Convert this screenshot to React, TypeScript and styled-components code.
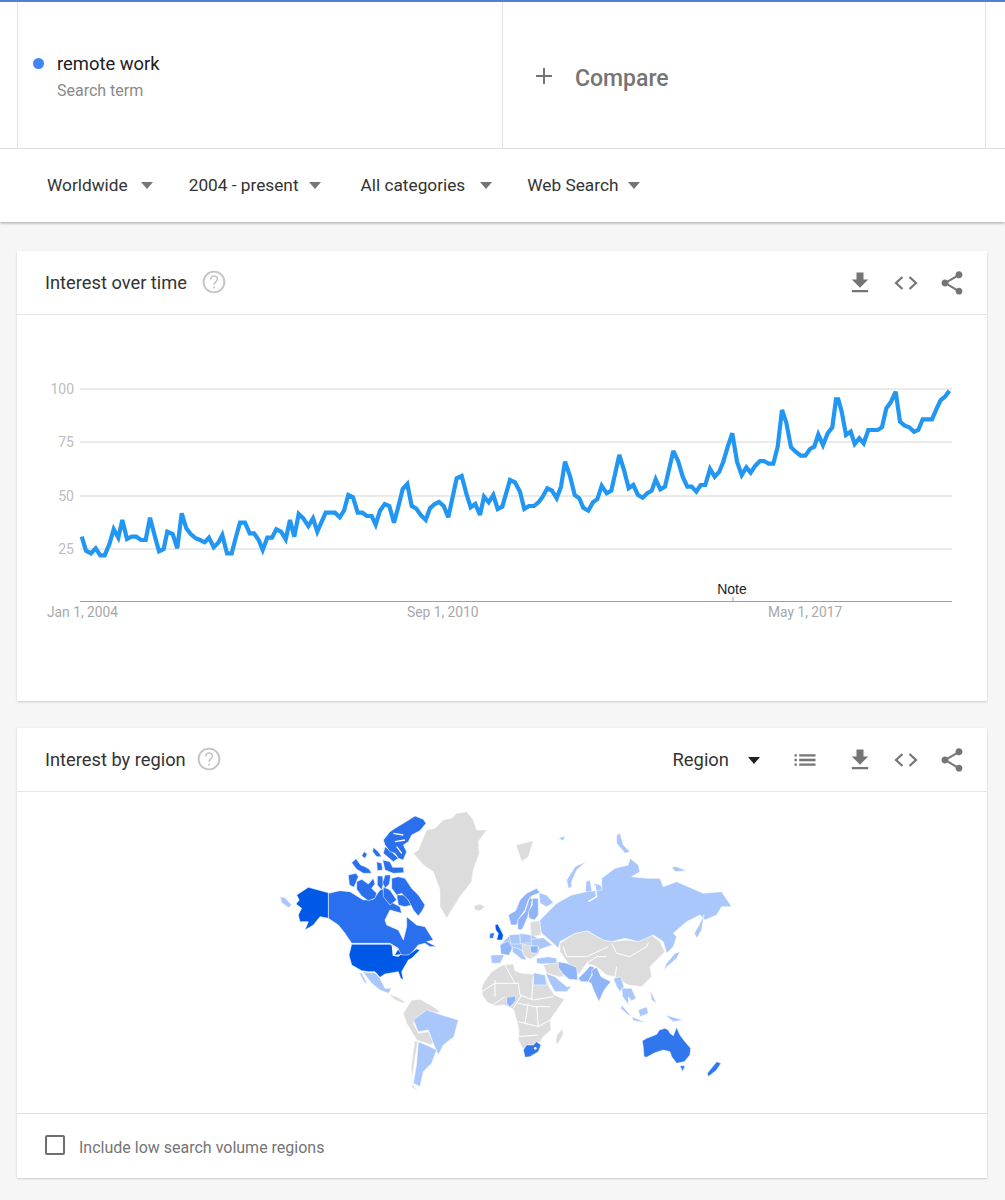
import React from "react";
import styled, { createGlobalStyle } from "styled-components";

const Global = createGlobalStyle`
  html, body { margin: 0; padding: 0; background: #f6f6f6; }
  body { font-family: Roboto, "Liberation Sans", sans-serif; }
`;

const Page = styled.div`
  width: 1005px;
  height: 1200px;
  overflow: hidden;
  background: #f6f6f6;
`;
const Header = styled.header`
  background: #fff;
  border-top: 2px solid #4f7fd0;
  box-shadow: 0 1px 3px rgba(0, 0, 0, 0.35);
  position: relative;
  margin-bottom: 29px;
`;
const Terms = styled.div`
  display: grid;
  grid-template-columns: 485px 484px;
  height: 146px;
  padding-left: 17px;
  border-bottom: 1px solid #dedede;
`;
const TermCell = styled.div`
  border-left: 1px solid #e2e2e2;
  display: flex;
  align-items: flex-start;
  padding: 51px 0 0 15px;
  box-sizing: border-box;
`;
const Dot = styled.span`
  width: 11px;
  height: 11px;
  border-radius: 50%;
  background: #4285f4;
  margin: 5px 13px 0 0;
  flex: none;
`;
const TermName = styled.div`
  font-size: 18.4px;
  line-height: 22px;
  color: #212121;
`;
const TermKind = styled.div`
  font-size: 16px;
  line-height: 20px;
  margin-top: 6px;
  color: #8a8a8a;
`;
const CompareCell = styled.div`
  border-left: 1px solid #e2e2e2;
  border-right: 1px solid #e2e2e2;
  display: flex;
  align-items: center;
  padding: 6px 0 0 31px;
  color: #757575;
  font-size: 23px;
  font-weight: 500;
  gap: 21px;
`;
const PlusIcon = styled.svg`
  display: block;
  margin-top: -4px;
`;
const Filters = styled.div`
  display: flex;
  align-items: center;
  height: 73px;
  padding: 0 0 1px 47px;
  box-sizing: border-box;
`;
const Filter = styled.div<{ $gap: number; $after: number }>`
  display: flex;
  align-items: center;
  gap: ${(p) => p.$gap}px;
  margin-right: ${(p) => p.$after}px;
  font-size: 17.25px;
  color: #333;
`;
const Caret = styled.span<{ $dark?: boolean }>`
  width: 0;
  height: 0;
  border-left: 6.5px solid transparent;
  border-right: 6.5px solid transparent;
  border-top: 7px solid ${(p) => (p.$dark ? "#212121" : "#757575")};
  margin-top: 1px;
`;
const Card = styled.section`
  background: #fff;
  width: 970px;
  margin: 0 0 27px 17px;
  box-shadow: 0 1px 2px rgba(0, 0, 0, 0.18);
`;
const CardHead = styled.div`
  height: 64px;
  box-sizing: border-box;
  border-bottom: 1.5px solid #e6e6e6;
  display: flex;
  align-items: center;
  padding: 0 21px 0 28px;
`;
const Title = styled.h2`
  margin: 0;
  font-size: 18.3px;
  font-weight: 400;
  color: #333;
`;
const Spacer = styled.div`
  flex: 1;
`;
const Tools = styled.div`
  display: flex;
  align-items: center;
  gap: 18px;
`;
const RegionPick = styled.div`
  display: flex;
  align-items: center;
  gap: 19px;
  margin-right: 31px;
  font-size: 18.4px;
  color: #333;
`;
const ListIcon = styled.svg`
  margin-right: 27px;
  display: block;
  fill: #757575;
`;
const Icon = styled.svg`
  display: block;
  fill: #757575;
`;
const HelpIcon = styled.svg<{ $left: number }>`
  display: block;
  margin: -2px 0 0 ${(p) => p.$left}px;
  fill: none;
  stroke: #c4c4c4;
`;
const ChartBody = styled.div`
  height: 386px;
`;
const ChartSvg = styled.svg`
  display: block;
`;
const MapBody = styled.div`
  height: 322px;
  box-sizing: border-box;
  border-bottom: 1px solid #e2e2e2;
  padding: 8px 0 0 253px;
`;
const MapSvg = styled.svg`
  display: block;
`;
const Foot = styled.label`
  display: flex;
  align-items: center;
  height: 64px;
  padding: 2px 0 0 28px;
  box-sizing: border-box;
  gap: 14px;
  font-size: 16px;
  color: #757575;
`;
const Box = styled.span`
  width: 20px;
  height: 20px;
  box-sizing: border-box;
  border: 2.5px solid #6f6f6f;
  border-radius: 2px;
  margin-top: -5px;
`;

const Download = () => (
  <Icon width="28" height="28" viewBox="0 0 24 24">
    <path d="M19 9h-4V3H9v6H5l7 7 7-7zM5 18v2h14v-2H5z" />
  </Icon>
);
const Code = () => (
  <Icon width="28" height="28" viewBox="0 0 28 28">
    <path d="M10.5 8 4 14l6.5 6M17.5 8 24 14l-6.5 6" fill="none" stroke="#757575" strokeWidth="2.2" />
  </Icon>
);
const Share = () => (
  <Icon width="28" height="28" viewBox="0 0 24 24">
    <path d="M18 16.08c-.76 0-1.44.3-1.96.77L8.91 12.7c.05-.23.09-.46.09-.7s-.04-.47-.09-.7l7.05-4.11c.54.5 1.25.81 2.04.81 1.66 0 3-1.34 3-3s-1.34-3-3-3-3 1.34-3 3c0 .24.04.47.09.7L8.04 9.81C7.5 9.31 6.79 9 6 9c-1.66 0-3 1.34-3 3s1.34 3 3 3c.79 0 1.5-.31 2.04-.81l7.12 4.16c-.05.21-.08.43-.08.65 0 1.61 1.31 2.92 2.92 2.92 1.61 0 2.92-1.31 2.92-2.92s-1.31-2.92-2.92-2.92z" />
  </Icon>
);
const Help = ({ left }: { left: number }) => (
  <HelpIcon $left={left} width="24" height="24" viewBox="0 0 24 24" strokeWidth="1.6">
    <circle cx="12" cy="12" r="10.4" strokeWidth="1.9" />
    <path d="M8.6 9.4c0-2 1.5-3.4 3.4-3.4s3.4 1.3 3.4 3.2c0 2.5-3.4 2.7-3.4 5.6" />
    <path d="M12 16.6v1.9" />
  </HelpIcon>
);

const L: number[][] = [[155,500],[168,542],[183,550],[197,535],[211,556],[224,556],[238,523],[251,478],[265,503],[277,450],[291,507],[305,500],[319,500],[333,510],[347,510],[360,443],[374,497],[387,544],[401,537],[412,485],[428,492],[442,535],[455,430],[469,475],[482,492],[497,505],[510,510],[524,517],[537,503],[551,532],[565,518],[577,495],[591,550],[605,550],[618,500],[630,458],[645,458],[659,490],[672,490],[686,510],[698,540],[712,503],[726,503],[739,478],[753,485],[767,508],[780,450],[793,500],[806,432],[820,445],[835,468],[849,445],[862,485],[875,455],[887,428],[901,428],[915,428],[929,442],[942,422],[955,375],[969,382],[983,428],[997,428],[1011,438],[1025,438],[1037,464],[1050,422],[1064,402],[1078,408],[1092,458],[1105,410],[1118,357],[1132,342],[1145,408],[1158,415],[1172,435],[1187,450],[1200,415],[1214,402],[1227,396],[1241,408],[1255,442],[1268,380],[1280,325],[1295,318],[1310,375],[1322,412],[1336,402],[1350,435],[1362,380],[1376,397],[1390,375],[1403,417],[1417,410]];
const R: number[][] = [[30,330],[45,337],[60,365],[73,417],[87,408],[102,408],[116,396],[128,380],[142,355],[156,362],[170,385],[183,350],[195,275],[210,318],[224,375],[238,385],[250,413],[265,422],[279,397],[292,388],[305,347],[320,370],[334,362],[358,255],[372,300],[386,355],[400,345],[414,375],[428,383],[442,370],[455,362],[467,328],[481,358],[495,350],[520,243],[534,272],[548,320],[562,350],[575,350],[589,365],[602,345],[616,345],[630,297],[644,320],[658,305],[670,275],[685,225],[697,190],[711,275],[725,315],[739,292],[752,308],[766,287],[780,273],[792,273],[806,281],[820,281],[833,230],[846,120],[859,158],[873,232],[887,245],[902,257],[916,257],[930,237],[943,230],[955,193],[969,225],[983,190],[997,172],[1008,88],[1015,88],[1025,125],[1038,195],[1052,185],[1064,222],[1078,205],[1091,220],[1105,180],[1119,180],[1133,180],[1146,172],[1159,115],[1172,97],[1187,65],[1200,155],[1214,167],[1228,172],[1242,185],[1255,180],[1268,148],[1282,148],[1296,148],[1310,115],[1322,90],[1335,80],[1348,62]];
const trend = [
  ...L.map(([x, y]) => `${(x / 3 + 30).toFixed(1)},${(y / 3 + 370).toFixed(1)}`),
  ...R.map(([x, y]) => `${(x / 3 + 500).toFixed(1)},${(y / 3 + 370).toFixed(1)}`),
].join(" ");

const Chart = () => (
  <ChartSvg width="970" height="386" viewBox="17 315 970 386" fontFamily="Roboto, sans-serif">
    {[389, 442, 496, 549].map((y) => (
      <line key={y} x1="80" x2="952" y1={y} y2={y} stroke="#e4e4e4" strokeWidth="1.3" />
    ))}
    {[["100", 394], ["75", 447], ["50", 501], ["25", 554]].map(([t, y]) => (
      <text key={t} x="74" y={y} textAnchor="end" fontSize="14" fill="#bdbdbd">{t}</text>
    ))}
    <line x1="80" x2="952" y1="601.5" y2="601.5" stroke="#9e9e9e" strokeWidth="1" />
    <line x1="733" x2="733" y1="597" y2="601" stroke="#9e9e9e" strokeWidth="1" />
    <text x="732" y="594" textAnchor="middle" fontSize="14" fill="#222" fontFamily="'Liberation Sans', sans-serif">Note</text>
    {[["Jan 1, 2004", 47], ["Sep 1, 2010", 407], ["May 1, 2017", 768]].map(([t, x]) => (
      <text key={t} x={x} y="617" fontSize="13.8" fill="#a8a8a8">{t}</text>
    ))}
    <polyline points={trend} fill="none" stroke="#2196f3" strokeWidth="4.2" strokeLinejoin="miter" strokeMiterlimit="3" />
  </ChartSvg>
);

const GRAY = "#dcdcdc";
const LIGHT = "#a9c7fb";
const MID = "#8fb4f8";
const CAN = "#2a70ee";
const USA = "#0058e6";
const AUS = "#3077ee";

type Shape = [string, string];
const americas: Shape[] = [
  [GRAY, "430,160 445,150 455,125 470,90 495,85 520,60 545,55 560,40 590,35 610,60 620,90 650,90 625,125 628,160 610,210 605,245 590,265 570,290 530,355 510,320 510,270 490,215 460,195"],
  [GRAY, "612,318 630,312 645,320 630,333 615,330"],
  [LIGHT, "30,290 45,293 65,315 55,323 35,308"],
  [CAN, "175,280 210,272 240,275 280,300 310,298 330,270 345,265 370,310 390,320 395,340 360,330 345,360 350,375 385,390 400,420 410,380 410,350 440,375 465,380 490,420 470,425 490,435 498,440 480,440 465,430 445,435 420,465 390,470 385,445 360,430 245,430 225,400 205,375 175,355"],
  [USA, "80,285 115,262 175,278 175,355 150,350 130,375 105,390 115,365 90,365 85,345 95,325 78,312 88,300"],
  [USA, "245,433 360,433 385,448 395,465 415,465 440,447 450,450 425,475 415,480 395,515 400,540 392,535 385,515 345,522 330,532 315,515 295,515 275,512 245,495 237,465"],
  [LIGHT, "278,515 295,518 315,518 330,535 345,565 365,565 355,580 330,570 305,550"],
  [LIGHT, "268,518 276,520 292,552 282,546"],
  [GRAY, "355,582 380,590 405,605 400,610 375,600"],
  [GRAY, "400,640 425,600 450,598 490,620 510,635 450,655 430,670 445,700 475,695 490,725 485,735 455,725 440,720 410,670"],
  [LIGHT, "430,660 470,630 515,645 565,660 552,710 520,735 505,765 490,730 475,690 445,695"],
  [LIGHT, "445,725 480,740 500,750 485,790 460,815 450,860 430,850 440,790"],
  [GRAY, "434,722 443,725 433,790 425,850 445,875 426,862 424,800"],
];
const arctic: Shape[] = [
  [CAN, "135,110 155,125 175,145 160,155 130,130"],
  [CAN, "150,65 165,55 190,40 225,18 250,28 258,40 240,62 215,75 205,95 190,105 200,125 190,150 175,145 165,130 150,125 135,105 130,90"],
  [CAN, "100,112 115,125 125,140 110,140 98,125"],
  [CAN, "72,125 82,132 75,145 65,138"],
  [CAN, "35,158 48,146 62,165 75,170 88,178 95,190 70,190 50,178"],
  [CAN, "110,155 125,160 128,180 112,182"],
  [CAN, "128,150 150,155 158,172 190,172 192,188 160,190 135,180"],
  [CAN, "25,195 48,190 55,200 42,232 28,225"],
  [CAN, "50,215 65,208 85,222 100,205 105,222 95,235 110,250 105,265 85,272 65,258 50,238"],
  [CAN, "130,230 150,240 170,270 150,285 130,260"],
  [CAN, "170,255 195,255 215,285 195,290 175,285"],
  [CAN, "112,198 128,198 130,222 125,240 112,225"],
  [CAN, "135,195 152,195 148,222 135,235 128,218"],
  [CAN, "155,205 175,200 195,205 215,235 235,255 255,285 248,300 235,318 220,300 205,270 185,250 170,255 155,235"],
];
const eurasia: Shape[] = [
  [GRAY, "48,135 100,122 85,170 65,185"],
  [LIGHT, "350,105 360,100 370,135 390,155 375,160 350,130"],
  [LIGHT, "515,200 530,200 560,212 525,215"],
  [LIGHT, "175,115 195,108 190,122"],
  [LIGHT, "205,265 200,240 225,200 258,185 230,210 215,245 215,262"],
  [GRAY, "180,430 225,400 260,393 310,420 335,425 380,420 415,425 455,405 480,425 495,455 470,480 450,500 455,530 425,560 385,555 345,530 320,525 290,500 260,490 235,525 215,510 205,490 180,455"],
  [LIGHT, "255,300 258,245 270,240 278,285"],
  [LIGHT, "282,250 300,255 315,275 290,290"],
  [LIGHT, "115,365 170,310 215,285 260,275 305,270 305,235 345,205 385,195 390,175 415,195 420,215 395,230 440,235 480,235 490,260 530,245 610,280 665,275 695,320 665,320 650,345 615,360 600,345 560,365 520,400 530,410 520,440 500,460 490,425 460,405 415,425 375,415 335,425 310,420 262,393 225,400 180,425 175,445 155,425 125,400"],
  [LIGHT, "600,370 612,345 605,390 590,415 583,400"],
  [LIGHT, "490,510 530,475 540,455 525,460 500,490"],
  [LIGHT, "340,535 362,530 372,560 360,575 350,560"],
  [LIGHT, "365,565 395,565 408,595 395,603 385,590 385,615 375,600 368,590"],
  [LIGHT, "365,615 395,650 385,645 362,625"],
  [LIGHT, "395,650 440,668 400,662"],
  [LIGHT, "415,630 440,620 445,640 420,650"],
  [LIGHT, "450,570 470,610 455,600"],
  [LIGHT, "495,645 550,660 520,665"],
  [AUS, "427,722 440,715 470,703 478,690 495,685 505,690 510,700 520,707 530,682 540,705 555,725 572,745 570,765 553,785 530,790 515,770 510,755 490,750 465,758 440,772 432,770 430,745"],
  [AUS, "540,797 555,797 548,815"],
  [AUS, "650,785 663,790 650,810 625,830 622,820"],
];
const eurafrica: Shape[] = [
  [GRAY, "20,325 28,305 50,275 70,262 85,255 115,252 120,272 140,280 175,282 210,285 222,320 238,345 268,358 250,385 235,405 225,420 228,450 205,470 195,485 165,500 150,510 140,500 130,480 132,450 125,420 115,388 100,380 85,375 60,378 35,365 22,345"],
  [LIGHT, "175,278 210,285 215,315 175,315"],
  [MID, "95,352 122,348 122,362 105,382 95,370"],
  [AUS, "145,510 155,495 175,495 185,485 198,495 190,515 165,530 150,532"],
  [GRAY, "262,447 265,462 250,490 242,490 245,465"],
  [GRAY, "205,255 250,245 255,270 268,290 250,290 215,280"],
  [LIGHT, "212,280 240,290 275,320 290,318 275,335 240,335 225,310"],
  [LIGHT, "185,235 220,230 245,235 245,250 200,252 185,250"],
  [MID, "250,245 275,250 305,262 308,300 282,298 262,280 250,262"],
  [MID, "310,295 330,275 345,258 358,262 350,285 340,305 318,305"],
  [MID, "340,305 352,285 350,270 365,262 378,290 408,305 395,320 385,335 372,365 358,335 348,310"],
  [MID, "100,105 122,92 135,60 155,40 185,25 195,38 170,48 160,60 150,90 132,115 125,135 108,135"],
  [MID, "128,120 150,95 165,50 172,60 165,90 158,110 148,135 140,150 128,148"],
  [MID, "172,55 190,55 190,85 190,105 178,120 162,115 160,95 172,75"],
  [LIGHT, "192,38 215,45 235,68 215,80 195,70"],
  [GRAY, "165,125 195,122 198,165 168,170"],
  [LIGHT, "75,195 105,165 170,165 232,195 195,208 188,225 165,238 140,210 112,205 100,225"],
  [USA, "60,135 68,132 75,145 85,165 82,180 65,180 70,160 62,150"],
  [AUS, "45,160 58,158 55,175 43,175"],
  [MID, "75,195 100,183 112,205 102,226 78,222"],
  [LIGHT, "47,225 88,224 76,250 50,250"],
  [LIGHT, "102,165 135,162 136,192 108,192"],
  [LIGHT, "135,160 168,165 170,188 136,190"],
  [LIGHT, "168,178 205,173 232,195 195,208 170,198"],
  [LIGHT, "112,200 140,210 155,240 140,238 112,215"],
  [GRAY, "140,192 190,200 185,225 165,238 145,225"],
  [MID, "165,198 190,198 188,220 168,218"],
];
const africaLines = [
  "20,335 60,310 130,310 135,345 175,360 235,350",
  "60,300 60,350",
  "90,255 120,310",
  "175,290 170,360",
  "130,370 180,380 225,380",
  "130,425 190,440",
  "160,370 150,430",
  "125,470 190,465",
  "185,380 190,440 225,420",
  "50,378 90,350",
  "140,345 115,385",
];
const asiaLines = [
  "335,430 350,460 390,470 440,440 445,428",
  "190,440 200,470 260,470 325,440",
  "260,490 290,470 320,470",
  "345,530 350,500",
];
const fjords = ["160,70 190,75", "165,95 195,90", "170,110 185,130"];

const Land = ({ shapes }: { shapes: Shape[] }) => (
  <>
    {shapes.map(([fill, pts], i) => (
      <polygon key={i} points={pts} fill={fill} stroke="#fff" strokeWidth="1.6" strokeLinejoin="round" />
    ))}
  </>
);

const WorldMap = () => (
  <MapSvg width="470" height="300" viewBox="270 800 470 300">
    <g transform="translate(270 800) scale(0.3333)">
      <Land shapes={americas} />
      <polygon points="365,435 385,448 375,465 395,462 385,470 368,467" fill="#fff" />
    </g>
    <g transform="translate(340 810) scale(0.3333)">
      <Land shapes={arctic} />
      {fjords.map((p) => (
        <polyline key={p} points={p} fill="none" stroke="#fff" strokeWidth="4" />
      ))}
    </g>
    <g transform="translate(500 800) scale(0.3333)">
      <Land shapes={eurasia} />
      {asiaLines.map((p) => (
        <polyline key={p} points={p} fill="none" stroke="#fff" strokeWidth="3" />
      ))}
      <polyline points="285,255 290,290 265,305" fill="none" stroke="#fff" strokeWidth="4" />
    </g>
    <g transform="translate(475 880) scale(0.3333)">
      <Land shapes={eurafrica} />
      {africaLines.map((p) => (
        <polyline key={p} points={p} fill="none" stroke="#fff" strokeWidth="3" />
      ))}
      <circle cx="181" cy="505" r="4" fill="#fff" />
    </g>
  </MapSvg>
);

const filters = [
  { label: "Worldwide", gap: 13, after: 36 },
  { label: "2004 - present", gap: 10, after: 40 },
  { label: "All categories", gap: 15, after: 35 },
  { label: "Web Search", gap: 10, after: 0 },
];

export default function App() {
  return (
    <Page>
      <Global />
      <Header>
        <Terms>
          <TermCell>
            <Dot />
            <div>
              <TermName>remote work</TermName>
              <TermKind>Search term</TermKind>
            </div>
          </TermCell>
          <CompareCell>
            <PlusIcon width="20" height="20" viewBox="0 0 20 20">
              <path d="M10 2v16M2 10h16" stroke="#757575" strokeWidth="2" fill="none" />
            </PlusIcon>
            Compare
          </CompareCell>
        </Terms>
        <Filters>
          {filters.map((f) => (
            <Filter key={f.label} $gap={f.gap} $after={f.after}>
              {f.label}
              <Caret />
            </Filter>
          ))}
        </Filters>
      </Header>
      <Card>
        <CardHead>
          <Title>Interest over time</Title>
          <Help left={15} />
          <Spacer />
          <Tools>
            <Download />
            <Code />
            <Share />
          </Tools>
        </CardHead>
        <ChartBody>
          <Chart />
        </ChartBody>
      </Card>
      <Card>
        <CardHead>
          <Title>Interest by region</Title>
          <Help left={11} />
          <Spacer />
          <RegionPick>
            Region
            <Caret $dark />
          </RegionPick>
          <ListIcon width="28" height="28" viewBox="0 0 24 24">
            <path d="M3 13h2v-2H3v2zm0 4h2v-2H3v2zm0-8h2V7H3v2zm4 4h14v-2H7v2zm0 4h14v-2H7v2zM7 7v2h14V7H7z" />
          </ListIcon>
          <Tools>
            <Download />
            <Code />
            <Share />
          </Tools>
        </CardHead>
        <MapBody>
          <WorldMap />
        </MapBody>
        <Foot>
          <Box />
          Include low search volume regions
        </Foot>
      </Card>
    </Page>
  );
}
